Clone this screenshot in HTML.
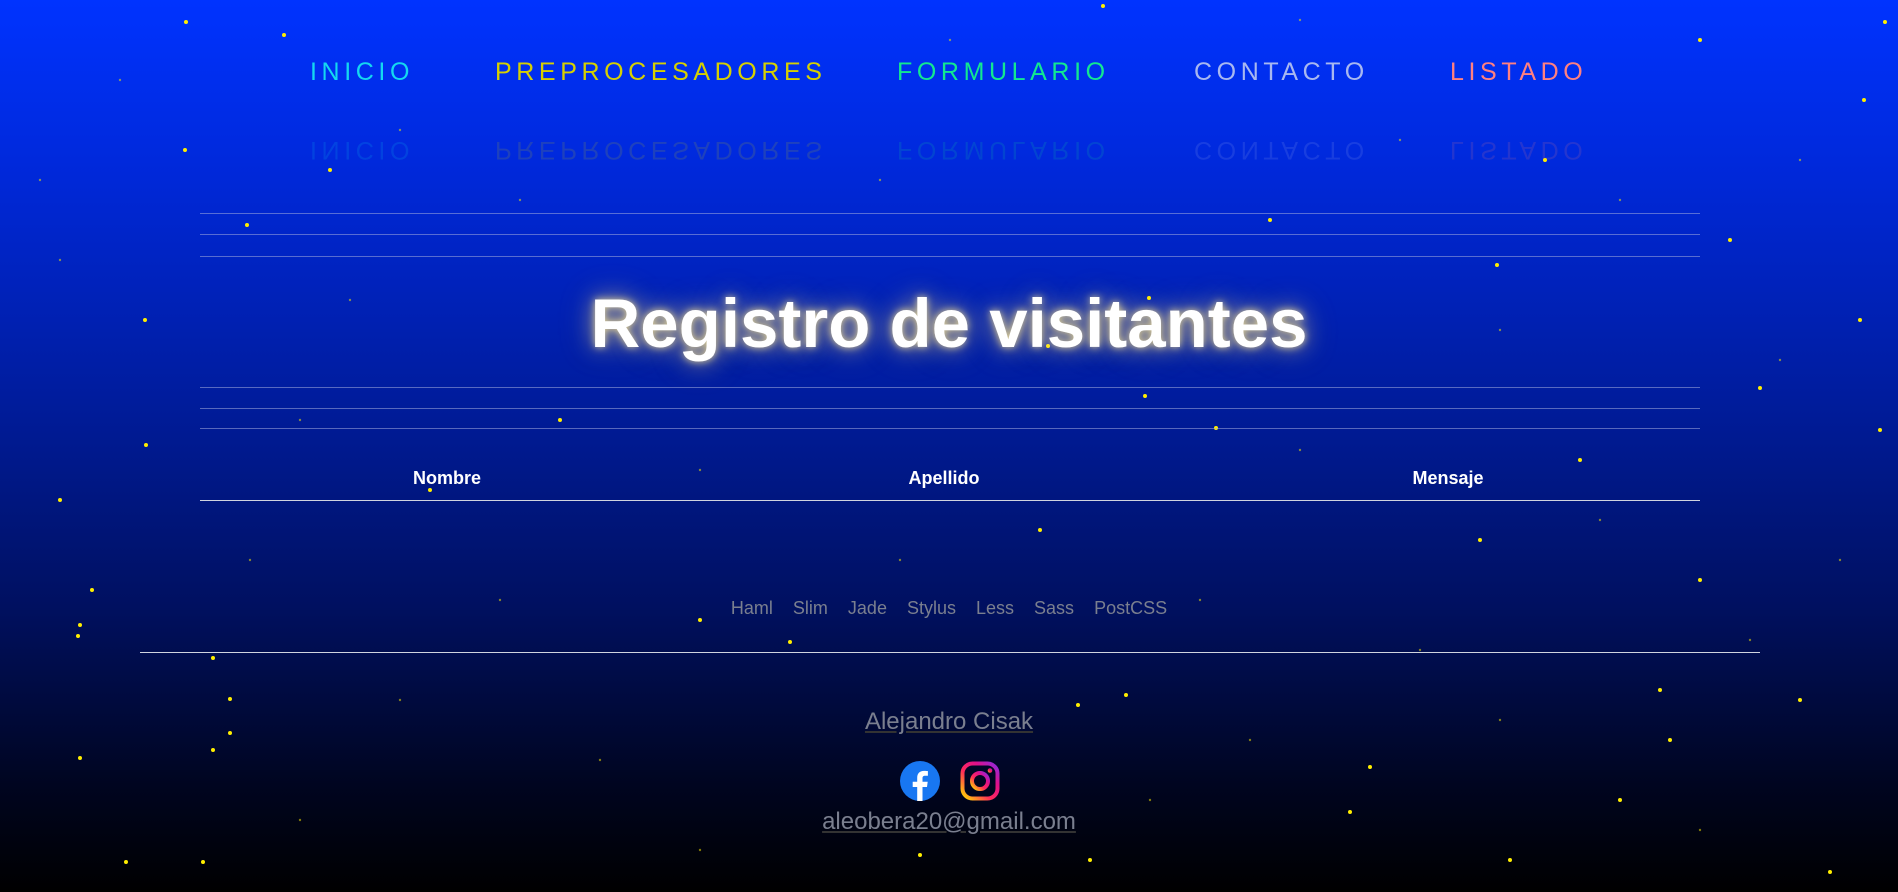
<!DOCTYPE html>
<html><head><meta charset="utf-8"><style>
*{margin:0;padding:0;box-sizing:border-box}
html,body{width:1898px;height:892px;overflow:hidden}
body{background:linear-gradient(#0033ff 0%,#0028d8 20%,#001c9c 45%,#001060 68%,#000520 88%,#000000 100%);font-family:"Liberation Sans",sans-serif;position:relative}
.stars{position:absolute;left:0;top:0}
nav{position:absolute;top:57px;left:0;width:1898px;height:40px}
nav span{position:absolute;font-size:25px;letter-spacing:4.6px;line-height:30px}
.refl{top:125px;transform:scaleY(-1);opacity:.14}
.hl{position:absolute;left:200px;width:1500px;height:1px;background:rgba(160,170,220,.55)}
h1{position:absolute;top:284px;left:0;width:1898px;text-align:center;font-size:69px;font-weight:bold;color:#fff;text-shadow:0 0 8px rgba(255,235,150,.85),0 0 22px rgba(255,225,120,.6),0 0 34px rgba(230,200,100,.35);line-height:80px}
.th{position:absolute;top:468px;font-size:18px;font-weight:bold;color:#fff;transform:translateX(-50%)}
.links{position:absolute;top:598px;left:0;width:1898px;text-align:center;font-size:18px;color:#7a7f8f}
.links span{margin:0 10px}
.name{position:absolute;top:708px;width:1898px;text-align:center;font-size:24px;color:#7a7f8f;text-decoration:underline;text-decoration-color:#333}
.mail{position:absolute;top:808px;width:1898px;text-align:center;font-size:24px;color:#7a7f8f;text-decoration:underline;text-decoration-color:#333}
</style></head><body>
<svg class="stars" width="1898" height="892" fill="#ffee00">
<circle cx="186" cy="22" r="2"/><circle cx="284" cy="35" r="2"/><circle cx="1103" cy="6" r="2"/><circle cx="1864" cy="100" r="2"/><circle cx="185" cy="150" r="2"/><circle cx="247" cy="225" r="2"/><circle cx="145" cy="320" r="2"/><circle cx="1497" cy="265" r="2"/><circle cx="1149" cy="298" r="2"/><circle cx="1145" cy="396" r="2"/><circle cx="1216" cy="428" r="2"/><circle cx="1048" cy="346" r="2"/><circle cx="1880" cy="430" r="2"/><circle cx="146" cy="445" r="2"/><circle cx="1760" cy="388" r="2"/><circle cx="1040" cy="530" r="2"/><circle cx="790" cy="642" r="2"/><circle cx="1078" cy="705" r="2"/><circle cx="1126" cy="695" r="2"/><circle cx="230" cy="733" r="2"/><circle cx="213" cy="750" r="2"/><circle cx="78" cy="636" r="2"/><circle cx="80" cy="758" r="2"/><circle cx="80" cy="625" r="2"/><circle cx="213" cy="658" r="2"/><circle cx="230" cy="699" r="2"/><circle cx="203" cy="862" r="2"/><circle cx="126" cy="862" r="2"/><circle cx="1370" cy="767" r="2"/><circle cx="1660" cy="690" r="2"/><circle cx="1670" cy="740" r="2"/><circle cx="1800" cy="700" r="2"/><circle cx="1480" cy="540" r="2"/><circle cx="1700" cy="580" r="2"/><circle cx="1580" cy="460" r="2"/><circle cx="560" cy="420" r="2"/><circle cx="330" cy="170" r="2"/><circle cx="1545" cy="160" r="2"/><circle cx="1730" cy="240" r="2"/><circle cx="1860" cy="320" r="2"/><circle cx="1350" cy="812" r="2"/><circle cx="1510" cy="860" r="2"/><circle cx="1830" cy="872" r="2"/><circle cx="1090" cy="860" r="2"/><circle cx="920" cy="855" r="2"/><circle cx="700" cy="620" r="2"/><circle cx="430" cy="490" r="2"/><circle cx="1270" cy="220" r="2"/><circle cx="1700" cy="40" r="2"/><circle cx="1885" cy="22" r="2"/><circle cx="60" cy="500" r="2"/><circle cx="92" cy="590" r="2"/><circle cx="1620" cy="800" r="2"/>
<g opacity=".5"><circle cx="120" cy="80" r="1.2"/><circle cx="400" cy="130" r="1.2"/><circle cx="520" cy="200" r="1.2"/><circle cx="880" cy="180" r="1.2"/><circle cx="1400" cy="140" r="1.2"/><circle cx="1620" cy="200" r="1.2"/><circle cx="1800" cy="160" r="1.2"/><circle cx="60" cy="260" r="1.2"/><circle cx="350" cy="300" r="1.2"/><circle cx="1500" cy="330" r="1.2"/><circle cx="1780" cy="360" r="1.2"/><circle cx="300" cy="420" r="1.2"/><circle cx="700" cy="470" r="1.2"/><circle cx="1300" cy="450" r="1.2"/><circle cx="1600" cy="520" r="1.2"/><circle cx="1840" cy="560" r="1.2"/><circle cx="250" cy="560" r="1.2"/><circle cx="500" cy="600" r="1.2"/><circle cx="900" cy="560" r="1.2"/><circle cx="1200" cy="600" r="1.2"/><circle cx="1420" cy="650" r="1.2"/><circle cx="1750" cy="640" r="1.2"/><circle cx="400" cy="700" r="1.2"/><circle cx="600" cy="760" r="1.2"/><circle cx="1250" cy="740" r="1.2"/><circle cx="1500" cy="720" r="1.2"/><circle cx="300" cy="820" r="1.2"/><circle cx="700" cy="850" r="1.2"/><circle cx="1150" cy="800" r="1.2"/><circle cx="1700" cy="830" r="1.2"/><circle cx="950" cy="40" r="1.2"/><circle cx="1300" cy="20" r="1.2"/><circle cx="40" cy="180" r="1.2"/></g>
</svg>
<nav>
<span style="left:310px;color:#14d8f0">INICIO</span>
<span style="left:495px;color:#d6d000">PREPROCESADORES</span>
<span style="left:897px;color:#12e890">FORMULARIO</span>
<span style="left:1194px;color:#a8b8f0">CONTACTO</span>
<span style="left:1450px;color:#ff8080">LISTADO</span>
</nav>
<nav class="refl">
<span style="left:310px;color:#14d8f0">INICIO</span>
<span style="left:495px;color:#d6d000">PREPROCESADORES</span>
<span style="left:897px;color:#12e890">FORMULARIO</span>
<span style="left:1194px;color:#a8b8f0">CONTACTO</span>
<span style="left:1450px;color:#ff8080">LISTADO</span>
</nav>
<div class="hl" style="top:213px"></div><div class="hl" style="top:234px"></div><div class="hl" style="top:256px"></div>
<h1>Registro de visitantes</h1>
<div class="hl" style="top:387px"></div><div class="hl" style="top:408px"></div><div class="hl" style="top:428px"></div>
<div class="th" style="left:447px">Nombre</div>
<div class="th" style="left:944px">Apellido</div>
<div class="th" style="left:1448px">Mensaje</div>
<div style="position:absolute;left:200px;top:500px;width:1500px;height:1px;background:#d0d4e0"></div>
<div class="links"><span>Haml</span><span>Slim</span><span>Jade</span><span>Stylus</span><span>Less</span><span>Sass</span><span>PostCSS</span></div>
<div style="position:absolute;left:140px;top:652px;width:1620px;height:1px;background:#d0d4e0"></div>
<div class="name">Alejandro Cisak</div>
<svg style="position:absolute;left:900px;top:761px" width="40" height="40" viewBox="0 0 40 40"><circle cx="20" cy="20" r="20" fill="#1877f2"/><path d="M22.5 40V26h4.5l.7-5.3h-5.2v-3.3c0-1.5.5-2.6 2.6-2.6h2.8v-4.7c-.5-.1-2.1-.2-4-.2-4 0-6.7 2.4-6.7 6.9v3.9h-4.5V26h4.5v14z" fill="#fff"/></svg>
<svg style="position:absolute;left:960px;top:761px" width="40" height="40" viewBox="0 0 40 40"><defs><linearGradient id="ig" x1="0" y1="1" x2="1" y2="0"><stop offset="0" stop-color="#fd0"/><stop offset=".4" stop-color="#ff2a5a"/><stop offset=".7" stop-color="#e0108a"/><stop offset="1" stop-color="#8a2be2"/></linearGradient></defs><rect x="2.5" y="2.5" width="35" height="35" rx="10" fill="none" stroke="url(#ig)" stroke-width="4"/><circle cx="20" cy="20" r="8" fill="none" stroke="url(#ig)" stroke-width="4"/><circle cx="30" cy="9.5" r="2.3" fill="url(#ig)"/></svg>
<div class="mail">aleobera20@gmail.com</div>
</body></html>
